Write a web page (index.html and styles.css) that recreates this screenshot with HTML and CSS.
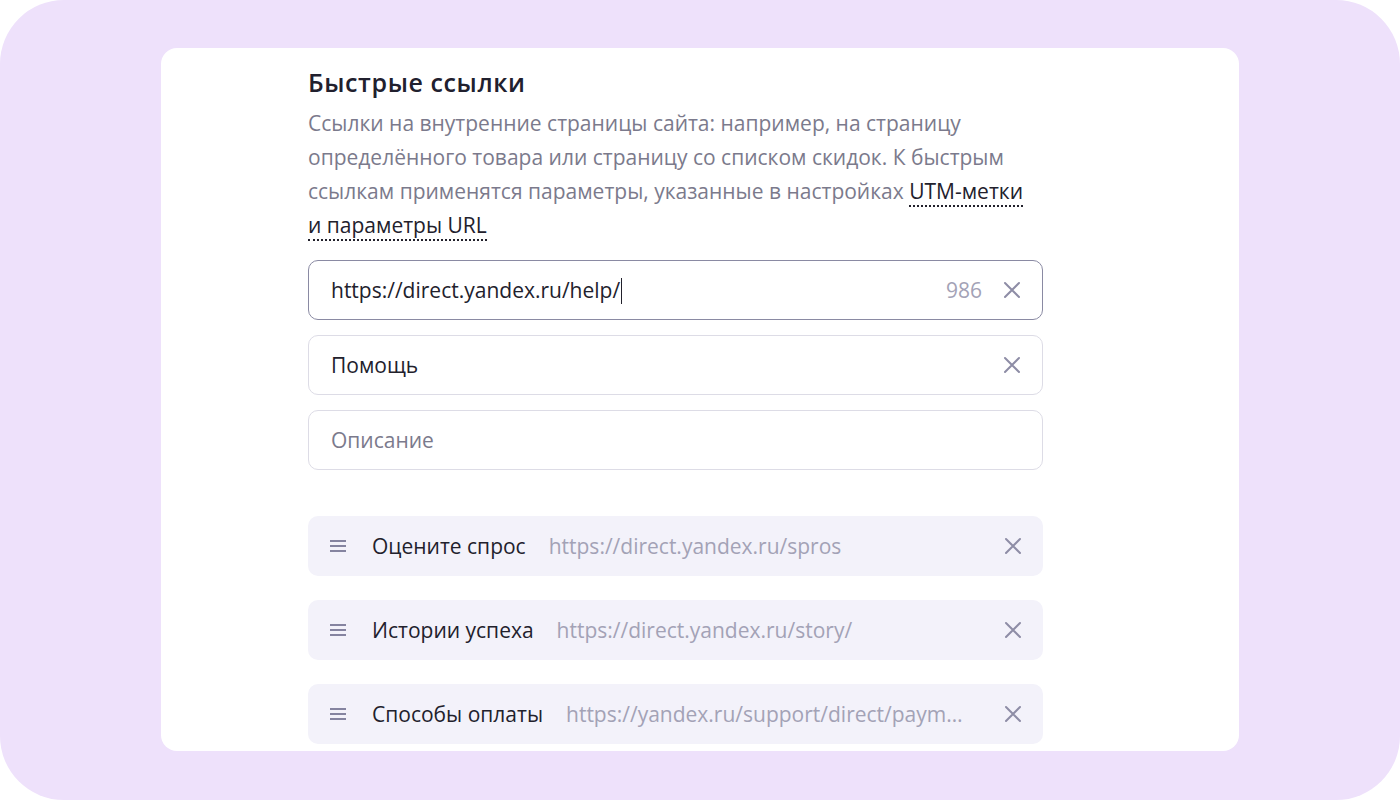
FILE: index.html
```html
<!DOCTYPE html>
<html lang="ru">
<head>
<meta charset="utf-8">
<title>Быстрые ссылки</title>
<link rel="stylesheet" href="styles.css">
</head>
<body>
<div class="frame">
  <div class="card">
    <div class="content">
      <h2 class="title">Быстрые ссылки</h2>
      <p class="desc">Ссылки на внутренние страницы сайта: например, на страницу определённого товара или страницу со списком скидок. К быстрым ссылкам применятся параметры, указанные в настройках <span class="link">UTM-метки</span> <span class="link">и параметры URL</span></p>

      <div class="fields">
        <div class="field focused">
          <span class="value">https://direct.yandex.ru/help/<span class="caret"></span></span>
          <span class="counter">986</span>
          <svg class="clear" viewBox="0 0 20 20" width="20" height="20"><path d="M3 3L17 17M17 3L3 17" stroke="currentColor" stroke-width="2" fill="none" stroke-linecap="round"/></svg>
        </div>
        <div class="field">
          <span class="value">Помощь</span>
          <svg class="clear" viewBox="0 0 20 20" width="20" height="20"><path d="M3 3L17 17M17 3L3 17" stroke="currentColor" stroke-width="2" fill="none" stroke-linecap="round"/></svg>
        </div>
        <div class="field">
          <span class="value placeholder">Описание</span>
        </div>
      </div>

      <div class="list">
        <div class="item">
          <svg class="drag" viewBox="0 0 16 14" width="16" height="14"><path d="M0 2H16M0 7H16M0 12H16" stroke="currentColor" stroke-width="2"/></svg>
          <span class="name">Оцените спрос</span>
          <span class="url">https://direct.yandex.ru/spros</span>
          <svg class="clear" viewBox="0 0 20 20" width="20" height="20"><path d="M3 3L17 17M17 3L3 17" stroke="currentColor" stroke-width="2" fill="none" stroke-linecap="round"/></svg>
        </div>
        <div class="item">
          <svg class="drag" viewBox="0 0 16 14" width="16" height="14"><path d="M0 2H16M0 7H16M0 12H16" stroke="currentColor" stroke-width="2"/></svg>
          <span class="name">Истории успеха</span>
          <span class="url">https://direct.yandex.ru/story/</span>
          <svg class="clear" viewBox="0 0 20 20" width="20" height="20"><path d="M3 3L17 17M17 3L3 17" stroke="currentColor" stroke-width="2" fill="none" stroke-linecap="round"/></svg>
        </div>
        <div class="item">
          <svg class="drag" viewBox="0 0 16 14" width="16" height="14"><path d="M0 2H16M0 7H16M0 12H16" stroke="currentColor" stroke-width="2"/></svg>
          <span class="name">Способы оплаты</span>
          <span class="url">https://yandex.ru/support/direct/paym…</span>
          <svg class="clear" viewBox="0 0 20 20" width="20" height="20"><path d="M3 3L17 17M17 3L3 17" stroke="currentColor" stroke-width="2" fill="none" stroke-linecap="round"/></svg>
        </div>
      </div>
    </div>
  </div>
</div>
</body>
</html>
```

FILE: styles.css
```css
* { box-sizing: border-box; }

html, body {
  margin: 0;
  padding: 0;
  background: #ffffff;
}

body {
  font-family: "Open Sans", "Noto Sans", sans-serif;
  color: #22212c;
}

.frame {
  width: 1400px;
  height: 800px;
  background: #eee1fb;
  border-radius: 64px;
  padding: 48px 161px 49px 161px;
  overflow: hidden;
}

.card {
  width: 1078px;
  height: 703px;
  background: #ffffff;
  border-radius: 16px;
  overflow: hidden;
  padding: 17px 0 0 147px;
}

.content {
  width: 735px;
}

.title {
  margin: 0 0 7px 0;
  font-size: 25px;
  line-height: 34px;
  font-weight: 600;
  letter-spacing: 0.6px;
  color: #21202e;
}

.desc {
  margin: 0;
  padding-right: 12px;
  font-size: 21px;
  line-height: 34px;
  color: #7b7a8c;
}

.link {
  color: #22212c;
  border-bottom: 2px dotted #22212c;
}

.fields {
  margin-top: 18px;
  display: flex;
  flex-direction: column;
  gap: 15px;
}

.field {
  height: 60px;
  border: 1px solid #dddce6;
  border-radius: 10px;
  display: flex;
  align-items: center;
  padding: 0 20px 0 22px;
}

.field.focused {
  border-color: #8a8aa3;
}

.value {
  flex: 1;
  font-size: 21px;
  color: #22212c;
  white-space: nowrap;
}

.placeholder {
  color: #7b7a8c;
}

.caret {
  display: inline-block;
  width: 1px;
  height: 26px;
  background: #22212c;
  vertical-align: -6px;
  margin-left: 1px;
}

.counter {
  font-size: 21px;
  color: #a3a2b6;
  margin-right: 20px;
}

.clear {
  color: #8e8da6;
  flex: none;
}

.list {
  margin-top: 46px;
  display: flex;
  flex-direction: column;
  gap: 24px;
}

.item {
  height: 60px;
  background: #f3f2fa;
  border-radius: 10px;
  display: flex;
  align-items: center;
  padding: 0 20px 0 22px;
}

.drag {
  color: #8584a0;
  flex: none;
  margin-right: 26px;
}

.name {
  font-size: 21px;
  color: #22212c;
  white-space: nowrap;
  flex: none;
  margin-right: 23px;
}

.url {
  flex: 1;
  min-width: 0;
  font-size: 21px;
  color: #a3a2b6;
  white-space: nowrap;
  overflow: hidden;
  text-overflow: ellipsis;
  margin-right: 28px;
}
```
